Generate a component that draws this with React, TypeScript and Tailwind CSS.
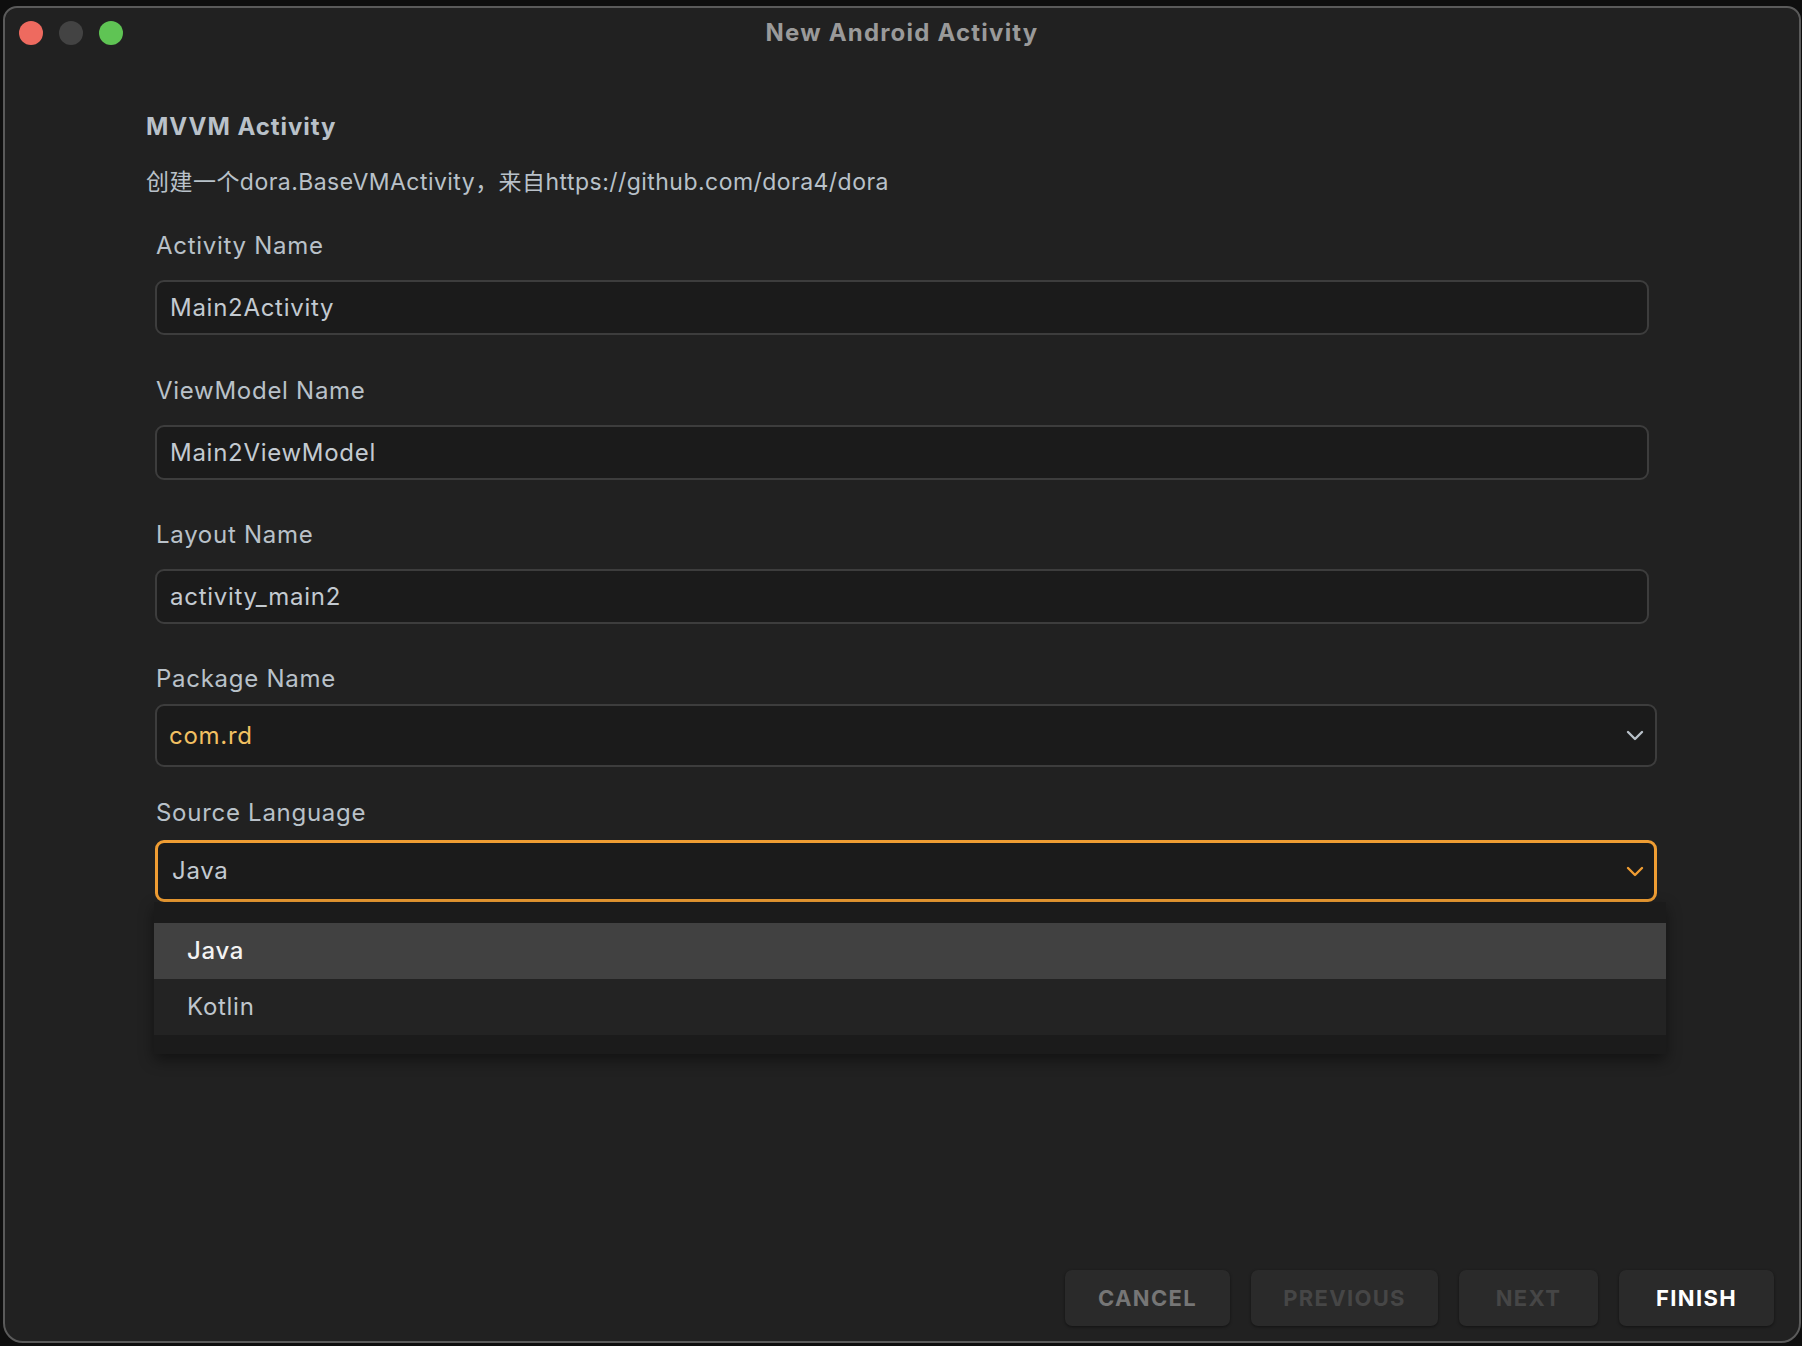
import React from 'react';

const FONT = 'font-["Inter","Noto_Sans_CJK_SC",sans-serif]';

const Chevron: React.FC<{ color: string }> = ({ color }) => (
  <svg width="18" height="11" viewBox="0 0 18 11" fill="none">
    <path d="M2 2 L9 9 L16 2" stroke={color} strokeWidth="2.4" strokeLinecap="round" strokeLinejoin="round" />
  </svg>
);

const TextField: React.FC<{ label: string; value: string; labelGap: string }> = ({ label, value, labelGap }) => (
  <div className={labelGap}>
    <div className="pl-px text-[24px] leading-[30px] tracking-[0.03em] text-[#b9c1c9]">{label}</div>
    <div className="mt-[19px] flex h-[55px] w-[1494px] items-center rounded-[9px] border-2 border-[#3d3d3d] bg-[#1b1b1b] pl-[13px] text-[24px] tracking-[0.03em] text-[#c3cad1]">
      {value}
    </div>
  </div>
);

const Button: React.FC<{ label: string; width: string; color: string }> = ({ label, width, color }) => (
  <button
    className={`flex h-[56px] ${width} items-center justify-center rounded-[7px] bg-[#2a2a2a] text-[22px] font-bold tracking-[0.06em] shadow-[0_1px_3px_rgba(0,0,0,0.45)] ${color}`}
  >
    {label}
  </button>
);

export default function App() {
  return (
    <div className={`h-[1346px] w-[1802px] overflow-hidden bg-[#0e0e0e] pt-[6px] pl-[3px] ${FONT}`}>
      <div className="flex h-[1337px] w-[1798px] flex-col rounded-[14px] rounded-b-[20px] border-2 border-[#5a5a5a] bg-[#212121]">
        {/* title bar */}
        <div className="flex h-[50px] items-center">
          <div className="flex w-[120px] items-center gap-[16px] pl-[14px]">
            <span className="h-[24px] w-[24px] rounded-full bg-[#ee6a5f]" />
            <span className="h-[24px] w-[24px] rounded-full bg-[#434343]" />
            <span className="h-[24px] w-[24px] rounded-full bg-[#5fc454]" />
          </div>
          <div className="flex-1 text-center text-[24px] font-bold tracking-[0.05em] text-[#9a9a9a]">New Android Activity</div>
          <div className="w-[120px]" />
        </div>

        {/* content */}
        <div className="pl-[141px] pt-[54px]">
          <div className="text-[24px] font-bold leading-[30px] tracking-[0.04em] text-[#b9c1c9]">MVVM Activity</div>
          <div className="mt-[25px] text-[23px] leading-[30px] tracking-[0.02em] text-[#b9c1c9]">
            创建一个dora.BaseVMActivity，来自https://github.com/dora4/dora
          </div>
        </div>

        <div className="pl-[150px]">
          <TextField label="Activity Name" value="Main2Activity" labelGap="mt-[34px]" />
          <TextField label="ViewModel Name" value="Main2ViewModel" labelGap="mt-[41px]" />
          <TextField label="Layout Name" value="activity_main2" labelGap="mt-[40px]" />

          <div className="mt-[40px]">
            <div className="pl-px text-[24px] leading-[30px] tracking-[0.03em] text-[#b9c1c9]">Package Name</div>
            <div className="mt-[10px] flex h-[63px] w-[1502px] items-center justify-between rounded-[9px] border-2 border-[#3d3d3d] bg-[#1b1b1b] pl-[12px] pr-[11px] text-[24px] tracking-[0.03em] text-[#f2c062]">
              <span>com.rd</span>
              <Chevron color="#b8c0c8" />
            </div>
          </div>

          <div className="mt-[31px]">
            <div className="pl-px text-[24px] leading-[30px] tracking-[0.03em] text-[#b9c1c9]">Source Language</div>
            <div className="relative mt-[12px]">
              <div className="flex h-[62px] w-[1502px] items-center justify-between rounded-[9px] border-[3px] border-[#ef9d33] bg-[#1b1b1b] pl-[14px] pr-[10px] text-[24px] tracking-[0.03em] text-[#c3cad1]">
                <span>Java</span>
                <Chevron color="#ef9d33" />
              </div>
              {/* dropdown popup */}
              <div className="absolute left-[-1px] top-full z-10 w-[1512px] bg-[#1b1b1b] pt-[21px] pb-[19px] shadow-[0_6px_14px_rgba(0,0,0,0.45)]">
                <div className="flex h-[56px] items-center bg-[#414141] pl-[33px] text-[24px] font-medium tracking-[0.03em] text-[#f3f3f3]">Java</div>
                <div className="flex h-[56px] items-center bg-[#232323] pl-[33px] text-[24px] tracking-[0.03em] text-[#bfc6cd]">Kotlin</div>
              </div>
            </div>
          </div>
        </div>

        <div className="flex-1" />

        {/* footer buttons */}
        <div className="flex justify-end gap-[21px] pb-[15px] pr-[25px]">
          <Button label="CANCEL" width="w-[165px]" color="text-[#767676]" />
          <Button label="PREVIOUS" width="w-[187px]" color="text-[#464646]" />
          <Button label="NEXT" width="w-[139px]" color="text-[#464646]" />
          <Button label="FINISH" width="w-[155px]" color="text-white" />
        </div>
      </div>
    </div>
  );
}
